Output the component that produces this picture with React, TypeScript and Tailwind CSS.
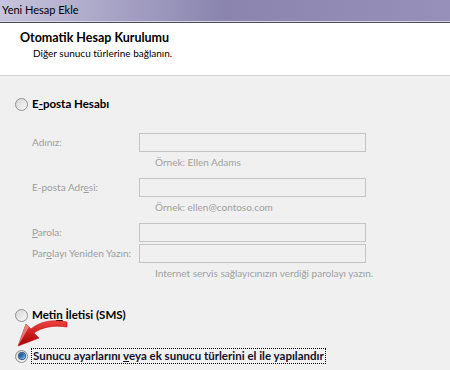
const font = { fontFamily: 'Lato, "Open Sans", sans-serif' }

function Radio({ checked }: { checked?: boolean }) {
  return (
    <span className="relative flex h-[13px] w-[13px] shrink-0 items-center justify-center rounded-full border border-[#8e8f8f] bg-gradient-to-br from-[#d8d8d8] to-[#f7f7f7]">
      {checked && (
        <span className="h-[6px] w-[6px] rounded-full bg-gradient-to-br from-[#1a3f66] via-[#2f74b8] to-[#8cc4ee] ring-1 ring-[#2d5a8a]" />
      )}
    </span>
  )
}

function Field({ label, hint }: { label: React.ReactNode; hint?: string }) {
  return (
    <div className="flex flex-col">
      <div className="flex items-center">
        <div className="w-[139px] shrink-0 whitespace-nowrap pl-[32px] text-[10px] text-[#9d9d9d]">{label}</div>
        <div className="h-[19px] w-[227px] border border-[#c4c4c4] bg-[#f0f0f0]" />
      </div>
      {hint && <div className="mt-[1px] h-[18px] pl-[155px] text-[10px] leading-[18px] text-[#a0a0a0]">{hint}</div>}
    </div>
  )
}

export default function App() {
  return (
    <div className="relative h-[370px] w-[450px] overflow-hidden bg-[#f0f0f0] text-black" style={font}>
      <div className="flex h-[21px] items-center bg-gradient-to-r from-[#c7c4dc] via-[#8a84ae] to-[#9690bb] pl-[2px] text-[11px] text-black">
        Yeni Hesap Ekle
      </div>
      <div className="h-[1px] bg-[#d8d6e6]" />
      <div className="h-[1px] bg-[#4a4a58]" />
      <div className="flex h-[52px] flex-col bg-white pt-[7px]">
        <div className="pl-[20px] text-[12.5px] font-bold leading-[16px]">Otomatik Hesap Kurulumu</div>
        <div className="pl-[33px] text-[10px] leading-[14px]">Diğer sunucu türlerine bağlanın.</div>
      </div>
      <div className="h-[1px] bg-[#cfcfcf]" />

      <div className="flex items-center gap-[4px] pl-[15px] pt-[20px]">
        <Radio />
        <span className="text-[11.5px] font-bold leading-[16px]">
          E<span className="underline">-</span>posta Hesabı
        </span>
      </div>

      <div className="mt-[21px] flex flex-col">
        <Field label="Adınız:" hint="Örnek: Ellen Adams" />
        <div className="h-[7px]" />
        <Field label={<>E-posta Adr<span className="underline">e</span>si:</>} hint="Örnek: ellen@contoso.com" />
        <div className="h-[7px]" />
        <Field label={<><span className="underline">P</span>arola:</>} />
        <div className="h-[2px]" />
        <Field
          label={<>Par<span className="underline">o</span>layı Yeniden Yazın:</>}
          hint="Internet servis sağlayıcınızın verdiği parolayı yazın."
        />
      </div>

      <div className="mt-[25px] flex items-center gap-[4px] pl-[15px]">
        <Radio />
        <span className="text-[11.5px] font-bold leading-[16px]">
          Meti<span className="underline">n</span> İletisi (SMS)
        </span>
      </div>

      <div className="mt-[25px] flex items-center gap-[3px] pl-[15px]">
        <Radio checked />
        <span className="whitespace-nowrap border border-dotted border-black px-[1px] text-[11.5px] font-bold leading-[14px] text-[#10102a]">
          Sunucu ayarlarını <span className="underline">v</span>eya ek sunucu türlerini el ile yapılandır
        </span>
      </div>

      <svg className="absolute left-[9px] top-[317px]" width="64" height="33" viewBox="0 0 64 33">
        <defs>
          <linearGradient id="ar" x1="0" y1="0" x2="0" y2="1">
            <stop offset="0" stopColor="#f04040" />
            <stop offset="1" stopColor="#a80000" />
          </linearGradient>
        </defs>
        <path
          d="M58 5 C45 2 31 4 22 12 L17 7 L9 29 L30 21 L25 16 C33 10 45 8 58 10 Z"
          fill="url(#ar)"
          stroke="#c01010"
          strokeWidth="0.6"
          strokeLinejoin="round"
        />
        <path d="M9 29 L17 7 L20 10 Z" fill="#ffd0d0" opacity="0.5" />
      </svg>
    </div>
  )
}
